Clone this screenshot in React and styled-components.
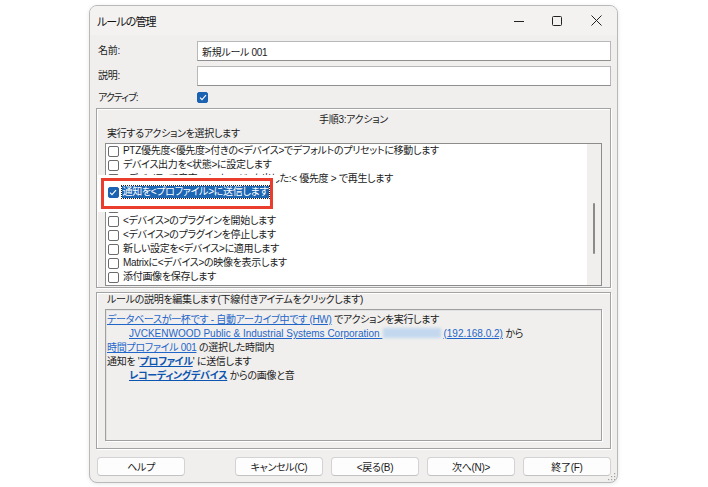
import React from 'react'
import styled, { createGlobalStyle } from 'styled-components'

const GlobalStyle = createGlobalStyle`
  html, body {
    margin: 0;
    padding: 0;
    background: #fff;
  }
  body {
    font-family: 'Liberation Sans', 'Noto Sans CJK JP', sans-serif;
    font-size: 10px;
    letter-spacing: -0.3px;
    font-feature-settings: 'palt' 1;
    color: #1b1b1b;
  }
`

const Page = styled.div`
  width: 708px;
  height: 487px;
  padding: 5px 0 0 89px;
  box-sizing: border-box;
`

const Window = styled.div`
  position: relative;
  width: 529px;
  height: 478px;
  box-sizing: border-box;
  border: 1px solid #b9b9b9;
  border-radius: 8px;
  background: #f0efee;
  display: flex;
  flex-direction: column;
  overflow: hidden;
  box-shadow: 0 1px 4px rgba(0, 0, 0, 0.1);
`

const TitleBar = styled.div`
  height: 29px;
  display: flex;
  align-items: center;
  padding-left: 7px;
  background: #f3f2f1;
`

const Title = styled.div`
  flex: 1;
  font-size: 11px;
  letter-spacing: -0.9px;
  color: #111;
`

const CaptionButton = styled.div`
  width: ${p => p.$w}px;
  height: 29px;
  display: flex;
  align-items: center;
  justify-content: center;
`

const Body = styled.div`
  flex: 1;
  display: flex;
  flex-direction: column;
  padding: 0 6px;
`

const Form = styled.div`
  display: grid;
  grid-template-columns: 101px 1fr;
  grid-template-rows: 20px 20px 13px;
  row-gap: 5px;
  padding-top: 6px;
  align-items: center;
`

const Label = styled.div`
  padding-left: 2px;
  line-height: 14px;
  letter-spacing: ${p => (p.$tight ? -1 : -0.3)}px;
`

const TextInput = styled.div`
  height: 20px;
  box-sizing: border-box;
  background: #fff;
  border: 1px solid #b8b8b8;
  border-bottom-color: #8f8f8f;
  padding-left: 4px;
  display: flex;
  align-items: center;
`

const Check = styled.span`
  width: 11px;
  height: 11px;
  box-sizing: border-box;
  border-radius: 2px;
  flex: none;
  display: inline-flex;
  align-items: center;
  justify-content: center;
  background: ${p => (p.$on ? '#1b62b3' : '#fff')};
  border: 1px solid ${p => (p.$on ? '#1b62b3' : '#6b6b6b')};
`

const GroupBox = styled.div`
  position: relative;
  box-sizing: border-box;
  height: ${p => p.$h}px;
  margin-top: ${p => p.$mt}px;
  border: 1px solid #a3a3a3;
  box-shadow: inset 1px 1px 0 #fff, 1px 1px 0 #fff;
  display: flex;
  flex-direction: column;
  padding: 0 8px;
`

const GroupHeading = styled.div`
  text-align: center;
  line-height: 14px;
  padding-top: 4px;
`

const GroupLabel = styled.div`
  line-height: 14px;
  padding-left: 2px;
`

const ListBox = styled.div`
  position: relative;
  margin-top: 2px;
  height: 143px;
  box-sizing: border-box;
  border: 1px solid #8c8c8c;
  background: #fff;
  display: flex;
`

const Items = styled.div`
  flex: 1;
  overflow: hidden;
`

const ItemRow = styled.div`
  height: 14px;
  display: flex;
  align-items: center;
  padding-left: 2px;
  white-space: pre;
`

const ItemText = styled.span`
  margin-left: 3px;
  line-height: 12px;
  padding: 0 1px;
  background: ${p => (p.$selected ? '#1d66b4' : 'transparent')};
  color: ${p => (p.$selected ? '#fff' : '#1b1b1b')};
  outline: ${p => (p.$selected ? '1px dotted #222' : 'none')};
`

const ScrollTrack = styled.div`
  width: 14px;
  background: #f0efee;
`

const ScrollThumb = styled.div`
  margin: 59px 0 0 6px;
  width: 2px;
  height: 51px;
  border-radius: 1px;
  background: #8a8a8a;
`

const Callout = styled.div`
  position: absolute;
  left: -5px;
  top: 34px;
  width: 172px;
  height: 31px;
  box-sizing: border-box;
  border: 3.5px solid #ea3d2d;
  background: #fff;
  box-shadow: 0 0 0 3px #fff;
  padding: 4px 0 0 1.5px;
  overflow: hidden;
`

const DescPanel = styled.div`
  margin-top: 2px;
  height: 132px;
  box-sizing: border-box;
  border: 1px solid #a0a0a0;
  box-shadow: inset 1px 1px 0 #e2e2e2, 1px 1px 0 #fff;
  background: #f0efee;
  padding: 3px 0 0 1px;
`

const DescLine = styled.div`
  line-height: 14px;
  white-space: nowrap;
  padding-left: ${p => (p.$indent ? 22 : 0)}px;
`

const Link = styled.span`
  color: ${p => (p.$bold ? '#0d55b0' : '#1f66c8')};
  font-weight: ${p => (p.$bold ? 700 : 400)};
  text-decoration: underline;
  text-underline-offset: 1px;
  letter-spacing: ${p => (p.$latin ? 0 : -0.3)}px;
`

const Blurred = styled.span`
  display: inline-block;
  width: 58px;
  height: 10px;
  margin: 0 2px 0 1px;
  vertical-align: -1px;
  background: #c3d8ee;
  filter: blur(1.5px);
`

const ButtonRow = styled.div`
  display: flex;
  gap: 8px;
  margin-top: 8px;
  padding-left: 1px;
`

const Spacer = styled.div`
  flex: 1;
`

const Button = styled.div`
  width: 88px;
  height: 19px;
  box-sizing: border-box;
  background: #fdfdfd;
  border: 1px solid #d3d3d3;
  border-bottom-color: #c2c2c2;
  border-radius: 4px;
  display: flex;
  align-items: center;
  justify-content: center;
`

const Grip = styled.svg`
  position: absolute;
  right: 1px;
  bottom: 1px;
`

const CheckMark = () => (
  <svg width="8" height="7" viewBox="0 0 8 7">
    <path d="M1 3.6 L3 5.6 L7 1.2" fill="none" stroke="#fff" strokeWidth="1.1" />
  </svg>
)

const actions = [
  'PTZ優先度<優先度>付きの<デバイス>でデフォルトのプリセットに移動します',
  'デバイス出力を<状態>に設定します',
  '<デバイス>で音声<メッセージ>を出した:< 優先度 > で再生します',
  '通知を<プロファイル>に送信します',
  '新しい<ログ>を作成します',
  '<デバイス>のプラグインを開始します',
  '<デバイス>のプラグインを停止します',
  '新しい設定を<デバイス>に適用します',
  'Matrixに<デバイス>の映像を表示します',
  '添付画像を保存します',
]

export default function App() {
  return (
    <Page>
      <GlobalStyle />
      <Window>
        <TitleBar>
          <Title>ルールの管理</Title>
          <CaptionButton $w={38}>
            <svg width="10" height="10" viewBox="0 0 10 10">
              <path d="M0 5.5 H10" stroke="#222" strokeWidth="1" />
            </svg>
          </CaptionButton>
          <CaptionButton $w={38}>
            <svg width="10" height="10" viewBox="0 0 10 10">
              <rect x="0.5" y="0.5" width="9" height="9" rx="1" fill="none" stroke="#222" strokeWidth="1" />
            </svg>
          </CaptionButton>
          <CaptionButton $w={41}>
            <svg width="11" height="11" viewBox="0 0 11 11">
              <path d="M0.5 0.5 L10.5 10.5 M10.5 0.5 L0.5 10.5" stroke="#222" strokeWidth="1" />
            </svg>
          </CaptionButton>
        </TitleBar>

        <Body>
          <Form>
            <Label>名前:</Label>
            <TextInput>新規ルール 001</TextInput>
            <Label>説明:</Label>
            <TextInput />
            <Label $tight>アクティブ:</Label>
            <div>
              <Check $on>
                <CheckMark />
              </Check>
            </div>
          </Form>

          <GroupBox $h={180} $mt={4}>
            <GroupHeading>手順3:アクション</GroupHeading>
            <GroupLabel>実行するアクションを選択します</GroupLabel>
            <ListBox>
              <Items>
                {actions.map((a, i) => (
                  <ItemRow key={i}>
                    <Check $on={i === 3}>{i === 3 && <CheckMark />}</Check>
                    <ItemText $selected={i === 3}>{a}</ItemText>
                  </ItemRow>
                ))}
              </Items>
              <ScrollTrack>
                <ScrollThumb />
              </ScrollTrack>
              <Callout>
                <ItemRow>
                  <Check $on>
                    <CheckMark />
                  </Check>
                  <ItemText $selected>{actions[3]}</ItemText>
                </ItemRow>
              </Callout>
            </ListBox>
          </GroupBox>

          <GroupBox $h={157} $mt={4}>
            <GroupLabel>ルールの説明を編集します(下線付きアイテムをクリックします)</GroupLabel>
            <DescPanel>
              <DescLine>
                <Link>データベースが一杯です - 自動アーカイブ中です (HW)</Link> でアクションを実行します
              </DescLine>
              <DescLine $indent>
                <Link $latin>JVCKENWOOD Public &amp; Industrial Systems Corporation </Link>
                <Blurred />
                <Link $latin>(192.168.0.2)</Link> から
              </DescLine>
              <DescLine>
                <Link>時間プロファイル 001</Link> の選択した時間内
              </DescLine>
              <DescLine>
                通知を '<Link $bold>プロファイル</Link>' に送信します
              </DescLine>
              <DescLine $indent>
                <Link $bold>レコーディングデバイス</Link> からの画像と音
              </DescLine>
            </DescPanel>
          </GroupBox>

          <ButtonRow>
            <Button>ヘルプ</Button>
            <Spacer />
            <Button>キャンセル(C)</Button>
            <Button>&lt;戻る(B)</Button>
            <Button>次へ(N)&gt;</Button>
            <Button>終了(F)</Button>
          </ButtonRow>
        </Body>

        <Grip width="8" height="8" viewBox="0 0 8 8">
          <g fill="#a0a0a0">
            <rect x="6" y="0" width="1.2" height="1.2" />
            <rect x="3" y="3" width="1.2" height="1.2" />
            <rect x="6" y="3" width="1.2" height="1.2" />
            <rect x="0" y="6" width="1.2" height="1.2" />
            <rect x="3" y="6" width="1.2" height="1.2" />
            <rect x="6" y="6" width="1.2" height="1.2" />
          </g>
        </Grip>
      </Window>
    </Page>
  )
}
